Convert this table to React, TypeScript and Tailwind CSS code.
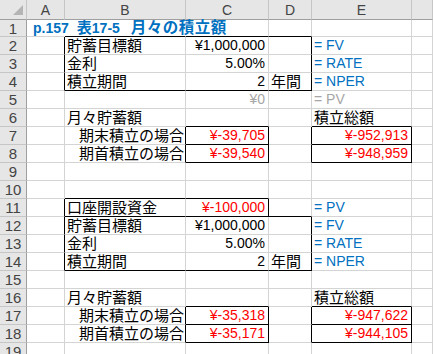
import React from 'react'

type Cell = { t: string; right?: boolean; color?: string; jp?: boolean; indent?: boolean }

const letters = ['A', 'B', 'C', 'D', 'E', '']

// [rowFrom, rowTo, colFrom, colTo] — col 1 = A
const boxes = [
    [2, 4, 2, 4],
    [7, 7, 3, 3], [8, 8, 3, 3], [7, 7, 5, 5], [8, 8, 5, 5],
    [11, 11, 2, 3],
    [12, 14, 2, 4],
    [17, 17, 3, 3], [18, 18, 3, 3], [17, 17, 5, 5], [18, 18, 5, 5],
]

const RED = 'text-[#ff0000]'
const BLUE = 'text-[#0070c0]'
const GRAY = 'text-[#a6a6a6]'

const data: Record<string, Cell> = {
    '2,2': { t: '貯蓄目標額', jp: true },
    '2,3': { t: '¥1,000,000', right: true },
    '2,5': { t: '= FV', color: BLUE },
    '3,2': { t: '金利', jp: true },
    '3,3': { t: '5.00%', right: true },
    '3,5': { t: '= RATE', color: BLUE },
    '4,2': { t: '積立期間', jp: true },
    '4,3': { t: '2', right: true },
    '4,4': { t: '年間', jp: true },
    '4,5': { t: '= NPER', color: BLUE },
    '5,3': { t: '¥0', right: true, color: GRAY },
    '5,5': { t: '= PV', color: GRAY },
    '6,2': { t: '月々貯蓄額', jp: true },
    '6,5': { t: '積立総額', jp: true },
    '7,2': { t: '期末積立の場合', jp: true, indent: true },
    '7,3': { t: '¥-39,705', right: true, color: RED },
    '7,5': { t: '¥-952,913', right: true, color: RED },
    '8,2': { t: '期首積立の場合', jp: true, indent: true },
    '8,3': { t: '¥-39,540', right: true, color: RED },
    '8,5': { t: '¥-948,959', right: true, color: RED },
    '11,2': { t: '口座開設資金', jp: true },
    '11,3': { t: '¥-100,000', right: true, color: RED },
    '11,5': { t: '= PV', color: BLUE },
    '12,2': { t: '貯蓄目標額', jp: true },
    '12,3': { t: '¥1,000,000', right: true },
    '12,5': { t: '= FV', color: BLUE },
    '13,2': { t: '金利', jp: true },
    '13,3': { t: '5.00%', right: true },
    '13,5': { t: '= RATE', color: BLUE },
    '14,2': { t: '積立期間', jp: true },
    '14,3': { t: '2', right: true },
    '14,4': { t: '年間', jp: true },
    '14,5': { t: '= NPER', color: BLUE },
    '16,2': { t: '月々貯蓄額', jp: true },
    '16,5': { t: '積立総額', jp: true },
    '17,2': { t: '期末積立の場合', jp: true, indent: true },
    '17,3': { t: '¥-35,318', right: true, color: RED },
    '17,5': { t: '¥-947,622', right: true, color: RED },
    '18,2': { t: '期首積立の場合', jp: true, indent: true },
    '18,3': { t: '¥-35,171', right: true, color: RED },
    '18,5': { t: '¥-944,105', right: true, color: RED },
}

const blackRight = (r: number, c: number) =>
    boxes.some(([r1, r2, c1, c2]) => r >= r1 && r <= r2 && (c === c2 || c + 1 === c1))

const blackBottom = (r: number, c: number) =>
    boxes.some(([r1, r2, c1, c2]) => c >= c1 && c <= c2 && (r === r2 || r + 1 === r1))

const rows = Array.from({ length: 19 }, (_, i) => i + 1)

const App = () => {
    return (
        <div className="w-[433px] h-[354px] overflow-hidden bg-white font-['Liberation_Sans','Noto_Sans_CJK_JP',sans-serif] text-[14px] text-black">
            <div className="grid grid-cols-[27px_38px_121px_83px_43px_100px_1fr] grid-rows-[20px_17px_repeat(18,18px)]">
                {/* corner */}
                <div className="bg-[#e6e6e6] border-r border-b border-r-[#c6c6c6] border-b-[#9f9f9f] flex items-end justify-end pr-[2px] pb-[3px]">
                    <svg width="11" height="11" viewBox="0 0 11 11">
                        <polygon points="0,10 10,10 10,0" fill="#b4b4b4" />
                    </svg>
                </div>
                {letters.map((l, i) => (
                    <div
                        key={`h-${i}`}
                        className="bg-[#e6e6e6] border-r border-b border-r-[#c6c6c6] border-b-[#9f9f9f] flex items-center justify-center text-[#444] pt-[1px]"
                    >
                        {l}
                    </div>
                ))}

                {rows.map((r) => (
                    <React.Fragment key={`r-${r}`}>
                        <div className="bg-[#e6e6e6] border-r border-b border-r-[#9f9f9f] border-b-[#c6c6c6] flex items-center justify-center text-[#444] text-[15px] leading-none">
                            {r}
                        </div>
                        {[1, 2, 3, 4, 5, 6].map((c) => {
                            const cell = data[`${r},${c}`]
                            const br = blackRight(r, c)
                            const bb = blackBottom(r, c)
                            const title = r === 1 && c === 1
                            const hideRight = r === 1 && (c === 1 || c === 2)
                            return (
                                <div
                                    key={`c-${r}-${c}`}
                                    className={`min-w-0 flex items-center whitespace-nowrap border-r border-b leading-[17px] ${
                                        br ? 'border-r-black' : hideRight ? 'border-r-transparent' : 'border-r-[#d4d4d4]'
                                    } ${bb ? 'border-b-black' : 'border-b-[#d4d4d4]'} ${
                                        cell?.right ? 'justify-end pr-[3px]' : cell?.indent ? 'pl-[14px]' : 'pl-[2px]'
                                    } ${cell?.color ?? ''} ${cell?.jp ? 'text-[15px]' : ''}`}
                                >
                                    {title ? (
                                        <span className="pl-[4px] font-bold text-[#0070c0] whitespace-nowrap">
                                            p.157
                                            <span className="ml-[8px] text-[15px]">表</span>17-5
                                            <span className="ml-[11px] text-[15.5px] tracking-[0.5px]">月々の積立額</span>
                                        </span>
                                    ) : (
                                        cell?.t
                                    )}
                                </div>
                            )
                        })}
                    </React.Fragment>
                ))}
            </div>
        </div>
    )
}

export default App
